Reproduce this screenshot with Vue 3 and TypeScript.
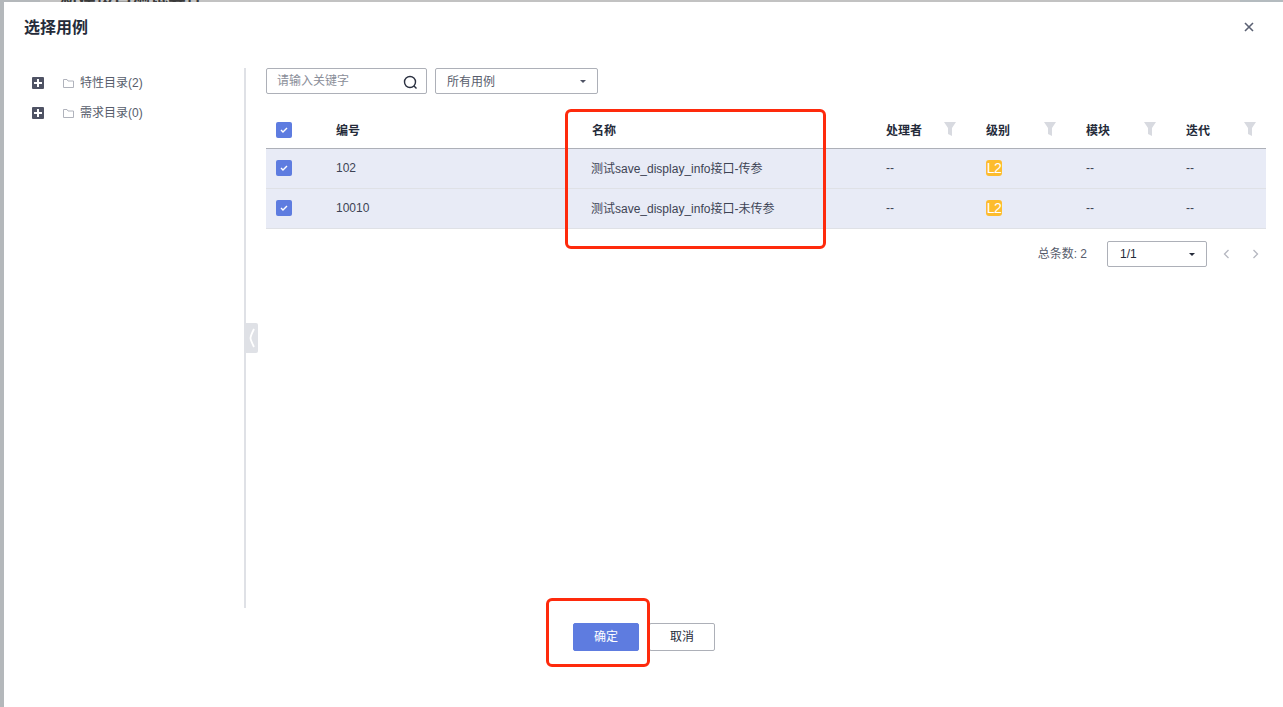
<script setup lang="ts">
interface Row { id: string; name: string }
const rows: Row[] = [
  { id: '102', name: '测试save_display_info接口-传参' },
  { id: '10010', name: '测试save_display_info接口-未传参' },
]
const tree = ['特性目录(2)', '需求目录(0)']
const filters = [
  { label: '处理者', cls: 'c-owner' },
  { label: '级别', cls: 'c-level' },
  { label: '模块', cls: 'c-module' },
  { label: '迭代', cls: 'c-iter' },
]
</script>

<template>
  <div class="page">
    <div class="peek">新建接口测试套件</div>
    <section class="modal">
      <header class="head">
        <h1 class="title">选择用例</h1>
        <svg class="close" width="10" height="10" viewBox="0 0 10 10"><path d="M1 1l8 8M9 1l-8 8" stroke="#5b6173" stroke-width="1.6" fill="none" /></svg>
      </header>

      <div class="body">
        <aside class="side">
          <div v-for="t in tree" :key="t" class="node">
            <span class="plus"></span>
            <svg class="folder" width="11" height="9" viewBox="0 0 11 9"><path d="M.5 8.500v-8h3.500l1 1.500h5.500v6.500z" fill="none" stroke="#b0b3bc" /></svg>
            <span class="node-label">{{ t }}</span>
          </div>
        </aside>

        <div class="divider">
          <div class="collapse">
            <svg width="6" height="20" viewBox="0 0 6 20"><path d="M5 1C2.500 6 1.500 8 1.500 10S2.500 14 5 19" stroke="#fff" stroke-width="1.800" fill="none" /></svg>
          </div>
        </div>

        <main class="main">
          <div class="toolbar">
            <div class="search">
              <span class="placeholder">请输入关键字</span>
              <svg class="search-icon" width="15" height="15" viewBox="0 0 15 15"><circle cx="7" cy="7" r="5.500" fill="none" stroke="#2a3040" stroke-width="1.400" /><path d="M11 11l2.500 2.500" stroke="#2a3040" stroke-width="1.400" /></svg>
            </div>
            <div class="select">
              <span class="select-text">所有用例</span>
              <i class="caret"></i>
            </div>
          </div>

          <div class="table">
            <div class="row head-row">
              <div class="c-check"><span class="check"><svg width="8" height="6" viewBox="0 0 8 6"><path d="M1 3l2 2 4-4" stroke="#fff" stroke-width="1.400" fill="none" /></svg></span></div>
              <div class="c-id">编号</div>
              <div class="c-name">名称</div>
              <div v-for="f in filters" :key="f.label" :class="['c-filter', f.cls]">
                <span>{{ f.label }}</span>
                <svg class="funnel" width="12" height="14" viewBox="0 0 12 14"><path d="M0 0h12L8 6v8L4 12V6z" fill="#d8dae0" /></svg>
              </div>
            </div>
            <div v-for="r in rows" :key="r.id" class="row data-row">
              <div class="c-check"><span class="check"><svg width="8" height="6" viewBox="0 0 8 6"><path d="M1 3l2 2 4-4" stroke="#fff" stroke-width="1.400" fill="none" /></svg></span></div>
              <div class="c-id">{{ r.id }}</div>
              <div class="c-name"><span class="name-text">{{ r.name }}</span></div>
              <div class="c-filter c-owner">--</div>
              <div class="c-filter c-level"><span class="badge">L2</span></div>
              <div class="c-filter c-module">--</div>
              <div class="c-filter c-iter">--</div>
            </div>
          </div>

          <div class="pager">
            <span class="total">总条数: 2</span>
            <div class="page-select"><span>1/1</span><i class="caret dark"></i></div>
            <svg class="arrow" width="7" height="10" viewBox="0 0 7 10"><path d="M5.500 1l-4 4 4 4" stroke="#b5b7c0" stroke-width="1.300" fill="none" /></svg>
            <svg class="arrow" width="7" height="10" viewBox="0 0 7 10"><path d="M1.500 1l4 4-4 4" stroke="#b5b7c0" stroke-width="1.300" fill="none" /></svg>
          </div>
        </main>
      </div>

      <footer class="foot">
        <button class="btn primary" type="button"><span class="btn-text">确定</span></button>
        <button class="btn" type="button"><span class="btn-text">取消</span></button>
      </footer>

      <div class="mark mark-table"></div>
      <div class="mark mark-ok"></div>
    </section>
  </div>
</template>

<style>
html, body { margin: 0; background: #fff; }
</style>

<style scoped>
.page {
  position: relative;
  width: 1283px;
  height: 707px;
  overflow: hidden;
  background: linear-gradient(90deg, #b4b8bb 0 40px, #c2c2c2 40px 1240px, #b4bbbf 1240px);
  padding: 2px 0 0 4px;
  box-sizing: border-box;
  font-family: "Liberation Sans", "Noto Sans CJK SC", sans-serif;
  font-size: 12px;
  color: #252b3a;
}
.peek {
  position: absolute;
  left: 60px;
  top: -11px;
  font-size: 18px;
  line-height: 18px;
  font-weight: 700;
  color: #3a3a3a;
}
.modal {
  position: relative;
  height: 705px;
  background: #fff;
  display: flex;
  flex-direction: column;
}
.head {
  height: 50px;
  flex: none;
  display: flex;
  align-items: center;
  justify-content: space-between;
  padding: 0 29px 0 20px;
  box-sizing: border-box;
}
.title {
  margin: 0;
  font-size: 16px;
  font-weight: 700;
  line-height: 50px;
  color: #252b3a;
  position: relative;
  top: 1px;
}
.body {
  display: flex;
  height: 540px;
  margin-top: 16px;
  flex: none;
}
.side {
  width: 240px;
  flex: none;
  padding-left: 28px;
  box-sizing: border-box;
}
.node {
  height: 30px;
  display: flex;
  align-items: center;
  color: #575d6c;
}
.plus {
  width: 12px;
  height: 12px;
  border-radius: 1px;
  background:
    linear-gradient(#fff, #fff) center / 8px 2px no-repeat,
    linear-gradient(#fff, #fff) center / 2px 8px no-repeat,
    #4f5364;
}
.folder { margin-left: 19px; }
.node-label { margin-left: 6px; position: relative; top: -2px; }
.divider {
  position: relative;
  width: 2px;
  flex: none;
  background: #dfe1e6;
}
.collapse {
  position: absolute;
  left: 1px;
  top: 255px;
  width: 13px;
  height: 30px;
  background: #dfe1e6;
  border-radius: 0 2px 2px 0;
  display: flex;
  align-items: center;
  justify-content: center;
}
.main {
  width: 1000px;
  flex: none;
  margin-left: 20px;
}
.toolbar {
  display: flex;
  gap: 8px;
  height: 26px;
}
.search, .select, .page-select {
  border: 1px solid #adb0b8;
  border-radius: 2px;
  box-sizing: border-box;
  height: 26px;
  display: flex;
  align-items: center;
  justify-content: space-between;
}
.search { width: 161px; padding: 0 8px 0 10px; }
.placeholder { color: #8a8e99; position: relative; top: -2px; }
.search-icon { position: relative; top: 1px; }
.select { width: 163px; padding: 0 11px 0 11px; color: #575d6c; }
.select-text { position: relative; top: -1px; }
.caret {
  width: 0;
  height: 0;
  border-left: 3px solid transparent;
  border-right: 3px solid transparent;
  border-top: 3px solid #4f5364;
}
.caret.dark { border-top-color: #252b3a; }
.table { margin-top: 16px; }
.row {
  display: flex;
  align-items: center;
  height: 40px;
  box-sizing: border-box;
  border-bottom: 1px solid #dfe1e6;
}
.head-row {
  height: 39px;
  border-bottom-color: #adb0b8;
  font-weight: 700;
  padding-top: 1px;
}
.data-row { background: #e8ebf6; color: #3d4354; padding-bottom: 1px; }
.c-check { width: 70px; flex: none; padding-left: 10px; box-sizing: border-box; display: flex; }
.c-id { width: 255px; flex: none; }
.c-name { width: 295px; flex: none; padding-left: 1px; box-sizing: border-box; }
.name-text { position: relative; top: -1px; left: -1px; }
.c-filter {
  width: 100px;
  flex: none;
  display: flex;
  align-items: center;
  justify-content: space-between;
  padding-right: 30px;
  box-sizing: border-box;
}
.c-iter { width: 80px; padding-right: 10px; }
.funnel { position: relative; top: -1px; }
.check {
  width: 16px;
  height: 16px;
  border-radius: 2px;
  background: #5e7ce0;
  display: flex;
  align-items: center;
  justify-content: center;
}
.badge {
  width: 16px;
  height: 16px;
  border-radius: 3px;
  background: #fdbc2d;
  color: #fff;
  font-size: 14px;
  letter-spacing: -0.5px;
  line-height: 16px;
  text-align: center;
}
.pager {
  display: flex;
  align-items: center;
  justify-content: flex-end;
  margin-top: 12px;
  height: 26px;
}
.total { color: #575d6c; margin-right: 20px; position: relative; top: -2px; }
.page-select { width: 100px; padding: 0 11px 0 12px; color: #252b3a; margin-right: 16px; }
.arrow { margin-right: 22px; }
.arrow:last-child { margin-right: 7px; }
.foot {
  display: flex;
  gap: 10px;
  margin-top: 15px;
  padding-left: 569px;
  flex: none;
}
.btn {
  width: 66px;
  height: 28px;
  box-sizing: border-box;
  border: 1px solid #adb0b8;
  border-radius: 2px;
  background: #fff;
  color: #252b3a;
  font: inherit;
  padding: 0;
}
.btn-text { position: relative; top: -2px; }
.btn.primary {
  background: #5e7ce0;
  border-color: #5e7ce0;
  color: #fff;
}
.mark {
  position: absolute;
  border: 3px solid #fe2a0c;
  border-radius: 6px;
  box-sizing: border-box;
}
.mark-table { left: 561px; top: 107px; width: 261px; height: 140px; }
.mark-ok { left: 542px; top: 596px; width: 104px; height: 69px; }
</style>
